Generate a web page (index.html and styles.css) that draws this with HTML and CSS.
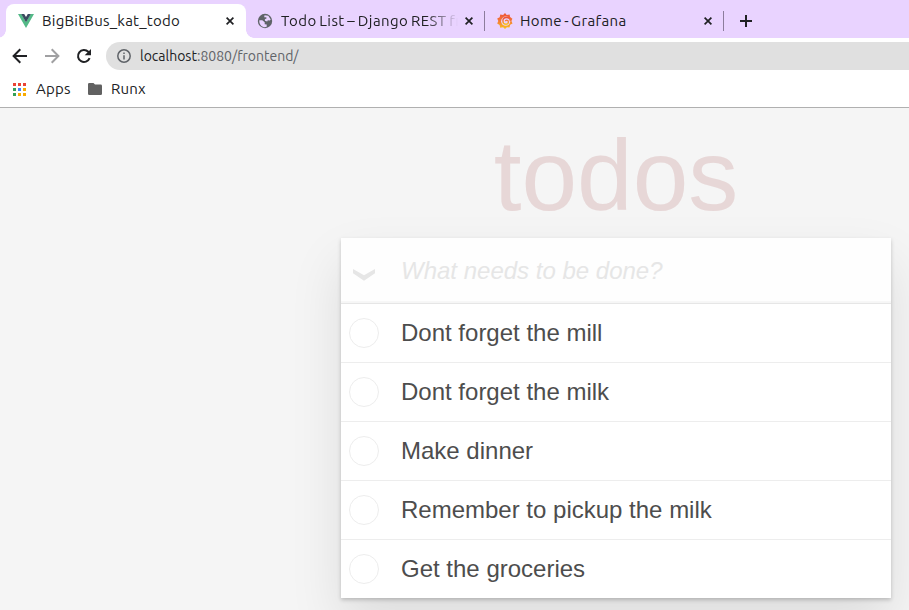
FILE: index.html
```html
<!DOCTYPE html>
<html lang="en">
<head>
<meta charset="utf-8">
<title>BigBitBus_kat_todo</title>
<link rel="stylesheet" href="styles.css">
</head>
<body>
<header class="browser">
  <div class="tabs">
    <div class="tab tab-active">
      <svg class="favicon" viewBox="0 0 16 16"><path fill="#53b987" d="M0 1h3.4L8 9l4.6-8H16L8 15z"/><path fill="#3a4b5f" d="M3.2 1h3L8 4l1.800-3h3L8 9.300z"/></svg>
      <span class="label label-vue">BigBitBus_kat_todo</span>
      <svg class="close" viewBox="0 0 8 8"><path d="M.6.6l6.800 6.800M7.400.6L.6 7.400"/></svg>
    </div>
    <div class="tab tab-django">
      <svg class="favicon" viewBox="0 0 16 16"><circle cx="8" cy="8" r="7.200" fill="#5f6368"/><path fill="#e9d3ff" d="M2.300 7.300h3l2.400 1.900v2l2 .2v2.300l-2 .5C4.200 14 2 11.100 2.300 7.300zM7.500 2.200l3.800.5 2.400 3.800-.8 1-2.100-.2-.6 1.300-2.200-.8-.2-1.600 1.700-.6-.2-1.300H7.200z"/></svg>
      <span class="label label-django">Todo List – Django REST fr</span>
      <svg class="close" viewBox="0 0 8 8"><path d="M.6.6l6.800 6.800M7.400.6L.6 7.400"/></svg>
    </div>
    <div class="tab tab-grafana">
      <svg class="favicon" viewBox="0 0 16 16"><defs><linearGradient id="flame" x2="0" y2="1"><stop stop-color="#ee5138"/><stop offset=".5" stop-color="#f47b35"/><stop offset="1" stop-color="#fbc51b"/></linearGradient></defs><path fill="url(#flame)" d="M8 0l1.700 2 2.900-.5.5 2.600 2.300 1.700-1 2.300 1.100 2.500-2.300 1.200-.7 2.800-2.600-.4L8 16l-1.900-1.700-2.900.4-.6-2.700L.2 10.500l1.100-2.400L.2 5.500l2.500-1.300.6-2.600 2.800.4z"/><circle cx="8.700" cy="8.200" r="4.600" fill="#e9d3ff"/><path fill="none" stroke="url(#flame)" stroke-width="1.400" d="M13.500 8.200c0-2.300-1.900-3.700-4.200-3.700-2 0-3.400 1.500-3.400 3.500 0 1.800 1.300 3.200 3 3.200 1.500 0 2.500-1 2.500-2.300 0-1-.7-1.800-1.700-1.800-.8 0-1.200.5-1.200 1.100"/></svg>
      <span class="label label-grafana">Home - Grafana</span>
      <svg class="close" viewBox="0 0 8 8"><path d="M.6.6l6.800 6.800M7.400.6L.6 7.400"/></svg>
    </div>
    <svg class="plus" viewBox="0 0 12 12"><path d="M6 0v12M0 6h12"/></svg>
  </div>
  <div class="toolbar">
    <svg class="nav" viewBox="0 0 16 16"><path d="M15 8H2M8.300 1.300L1.600 8l6.700 6.700"/></svg>
    <svg class="nav nav-off" viewBox="0 0 16 16"><path d="M1 8h13M7.700 1.300L14.400 8l-6.700 6.700"/></svg>
    <svg class="nav" viewBox="0 0 16 16"><path d="M13.600 10.200A6 6 0 1 1 12.300 3.800L14 5.500"/><path class="solid" d="M15 1v6.300H8.700z"/></svg>
    <div class="address">
      <svg class="info" viewBox="0 0 14 14"><circle cx="7" cy="7" r="6.200"/><path d="M7 6.200v4.200M7 3.400v1.500"/></svg>
      <span class="url"><b>localhost</b>:8080/frontend/</span>
    </div>
  </div>
  <nav class="bookmarks">
    <svg class="apps" viewBox="0 0 13 13"><path fill="#ea4335" d="M0 0h3v3H0zM5 0h3v3H5zM10 0h3v3h-3z"/><path fill="#34a058" d="M0 5h3v3H0zM0 10h3v3H0z"/><path fill="#4285f4" d="M5 5h3v3H5z"/><path fill="#f9ab00" d="M10 5h3v3h-3zM5 10h3v3H5zM10 10h3v3h-3z"/></svg>
    <span class="mark mark-apps">Apps</span>
    <svg class="folder" viewBox="0 0 14 12"><path d="M1.300 0h4.200L7 1.600h5.700Q14 1.600 14 3v7.700Q14 12 12.700 12H1.300Q0 12 0 10.700V1.300Q0 0 1.300 0z"/></svg>
    <span class="mark mark-runx">Runx</span>
  </nav>
</header>
<main class="page">
  <div class="app">
    <h1>todos</h1>
    <section class="card">
      <div class="entry">
        <svg class="chevron" viewBox="0 0 22 12"><path d="M0 0l11 6.200L22 0v4.300L11 11.700 0 4.300z"/></svg>
        <input class="new-todo" placeholder="What needs to be done?">
      </div>
      <ul class="list">
        <li><i class="toggle"></i><span>Dont forget the mill</span></li>
        <li><i class="toggle"></i><span>Dont forget the milk</span></li>
        <li><i class="toggle"></i><span>Make dinner</span></li>
        <li><i class="toggle"></i><span>Remember to pickup the milk</span></li>
        <li><i class="toggle"></i><span>Get the groceries</span></li>
      </ul>
    </section>
  </div>
</main>
</body>
</html>
```
FILE: styles.css
```css
* { box-sizing: border-box; }
body { margin: 0; height: 610px; overflow: hidden; background: #f5f5f5; font-family: "Liberation Sans", Arial, sans-serif; }
svg { display: block; flex: none; }

.browser { height: 108px; background: #fff; border-bottom: 1px solid #b0b0b0; font-family: Ubuntu, "Noto Sans", sans-serif; color: #202124; }
.tabs { height: 38px; padding: 4px 0 0 6px; display: flex; background: #e9d3ff; }
.tab { height: 34px; display: flex; align-items: center; }
.tab-active { position: relative; width: 240px; padding: 0 12px; background: #fff; border-radius: 8px 8px 0 0; }
.tab-active::before, .tab-active::after { content: ""; position: absolute; bottom: 0; width: 8px; height: 8px; }
.tab-active::before { left: -8px; background: radial-gradient(circle at 0 0, #e9d3ff 7.500px, #fff 8px); }
.tab-active::after { right: -8px; background: radial-gradient(circle at 100% 0, #e9d3ff 7.500px, #fff 8px); }
.tab-django, .tab-grafana { width: 239px; padding: 0 12px 0 11px; background: linear-gradient(#8c7c9c, #8c7c9c) right 7px / 1px 20px no-repeat; }
.favicon { width: 16px; height: 16px; margin-right: 8px; }
.tab-grafana .favicon { margin-left: 1px; margin-right: 7px; }
.label { font-size: 15px; line-height: 20px; white-space: pre; }
.label-vue { letter-spacing: .25px; }
.label-django { width: 177px; letter-spacing: .42px; word-spacing: -1.200px; -webkit-mask-image: linear-gradient(90deg, #000 145px, transparent 177px); mask-image: linear-gradient(90deg, #000 145px, transparent 177px); }
.label-grafana { letter-spacing: .35px; word-spacing: -1.500px; }
.close { width: 8px; height: 8px; margin-left: auto; fill: none; stroke: #202124; stroke-width: 1.700; }
.plus { width: 12px; height: 12px; margin: 11px 0 0 16px; fill: none; stroke: #202124; stroke-width: 2; }

.toolbar { height: 36px; padding-left: 12px; display: flex; align-items: center; }
.nav { width: 16px; height: 16px; margin-right: 16px; fill: none; stroke: #202124; stroke-width: 2; }
.nav:nth-of-type(3) { margin-right: 14px; }
.nav-off { stroke: #a0a0a2; }
.nav .solid { fill: #202124; stroke: none; }
.address { flex: 1; height: 28px; padding-left: 11px; display: flex; align-items: center; background: #e0e0e0; border-radius: 14px 0 0 14px; }
.info { width: 14px; height: 14px; margin-right: 9px; fill: none; stroke: #5f6368; stroke-width: 1.500; }
.url { font-size: 14px; line-height: 20px; color: #5f6368; }
.url b { font-weight: 400; color: #202124; }

.bookmarks { height: 30px; padding-left: 13px; display: flex; align-items: center; }
.apps { width: 13px; height: 13px; margin-right: 10px; }
.mark { font-size: 15px; line-height: 20px; letter-spacing: .2px; white-space: nowrap; }
.mark-apps { width: 52px; }
.folder { width: 14px; height: 12px; margin-right: 9px; fill: #616161; }

.page { height: 502px; padding-left: 341px; }
.app { width: 550px; }
h1 { margin: 0; height: 130px; font-size: 100px; font-weight: 400; line-height: 135px; text-align: center; color: #e7d7d7; }
.card { background: #fff; box-shadow: 0 2px 4px rgba(0, 0, 0, .2), 0 25px 50px rgba(0, 0, 0, .1); }
.entry { height: 65px; padding-left: 12px; display: flex; align-items: center; background: #fefefe; box-shadow: inset 0 -2px 1px rgba(0, 0, 0, .03); }
.chevron { width: 22px; height: 12px; margin: 9px 26px 0 0; fill: #e6e6e6; }
.new-todo { flex: 1; height: 65px; padding: 0; border: 0; outline: 0; background: none; font: 24px "Liberation Sans", Arial, sans-serif; }
.new-todo::placeholder { color: #e6e6e6; font-style: italic; opacity: 1; }
.list { margin: 0; padding: 0; list-style: none; border-top: 1px solid #e6e6e6; font-size: 24px; line-height: 29px; color: #4d4d4d; }
.list li { height: 59px; padding-left: 8px; display: flex; align-items: center; border-bottom: 1px solid #ededed; }
.list li:last-child { height: 58px; border-bottom: 0; }
.list span { padding-bottom: 2px; }
.toggle { width: 30px; height: 30px; margin-right: 22px; border: 1px solid #ededed; border-radius: 50%; }
```
